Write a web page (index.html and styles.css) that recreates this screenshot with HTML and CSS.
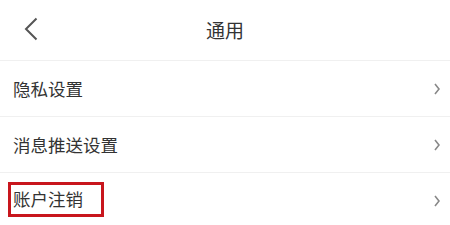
FILE: index.html
```html
<!DOCTYPE html>
<html>
<head>
    <title>通用</title>
    <link rel="stylesheet" href="styles.css">
</head>
<body>
    <div class="page">
        <div class="header">
            <span class="back">
                <svg width="14" height="24" viewBox="0 0 14 24">
                    <path d="M12.5 1.5 L2 12 L12.5 22.5" fill="none" stroke="#555" stroke-width="2"/>
                </svg>
            </span>
            <h1 class="title">通用</h1>
        </div>

        <div class="menu">
            <div class="menu-item">
                <span class="label">隐私设置</span>
                <span class="arrow">
                    <svg width="6" height="12" viewBox="0 0 6 12">
                        <path d="M1 1 L5 6 L1 11" fill="none" stroke="#888" stroke-width="1.6"/>
                    </svg>
                </span>
            </div>
            <div class="menu-item">
                <span class="label">消息推送设置</span>
                <span class="arrow">
                    <svg width="6" height="12" viewBox="0 0 6 12">
                        <path d="M1 1 L5 6 L1 11" fill="none" stroke="#888" stroke-width="1.6"/>
                    </svg>
                </span>
            </div>
            <div class="menu-item">
                <span class="label marked">账户注销</span>
                <span class="arrow">
                    <svg width="6" height="12" viewBox="0 0 6 12">
                        <path d="M1 1 L5 6 L1 11" fill="none" stroke="#888" stroke-width="1.6"/>
                    </svg>
                </span>
            </div>
        </div>
    </div>
</body>
</html>
```

FILE: styles.css
```css
* {
    margin: 0;
    padding: 0;
    box-sizing: border-box;
}

body {
    background: #fff;
    font-family: "Noto Sans CJK SC", "Noto Sans", sans-serif;
    color: #333;
}

.page {
    width: 450px;
}

.header {
    height: 61px;
    border-bottom: 1px solid #f0f0f0;
    display: flex;
    align-items: center;
    justify-content: center;
    position: relative;
}

.back {
    position: absolute;
    left: 24px;
    top: 17px;
    display: flex;
}

.title {
    font-size: 19px;
    font-weight: normal;
    color: #333;
    margin-top: -1px;
}

.menu-item {
    height: 56px;
    border-bottom: 1px solid #f0f0f0;
    display: flex;
    align-items: center;
    justify-content: space-between;
    padding: 0 10px 0 13px;
}

.label {
    font-size: 17.5px;
    line-height: 24px;
}

.label.marked {
    border: 3px solid #c8161d;
    margin-left: -5px;
    margin-top: -3px;
    padding: 2px 18px 3px 2px;
}

.arrow {
    display: flex;
}
```
